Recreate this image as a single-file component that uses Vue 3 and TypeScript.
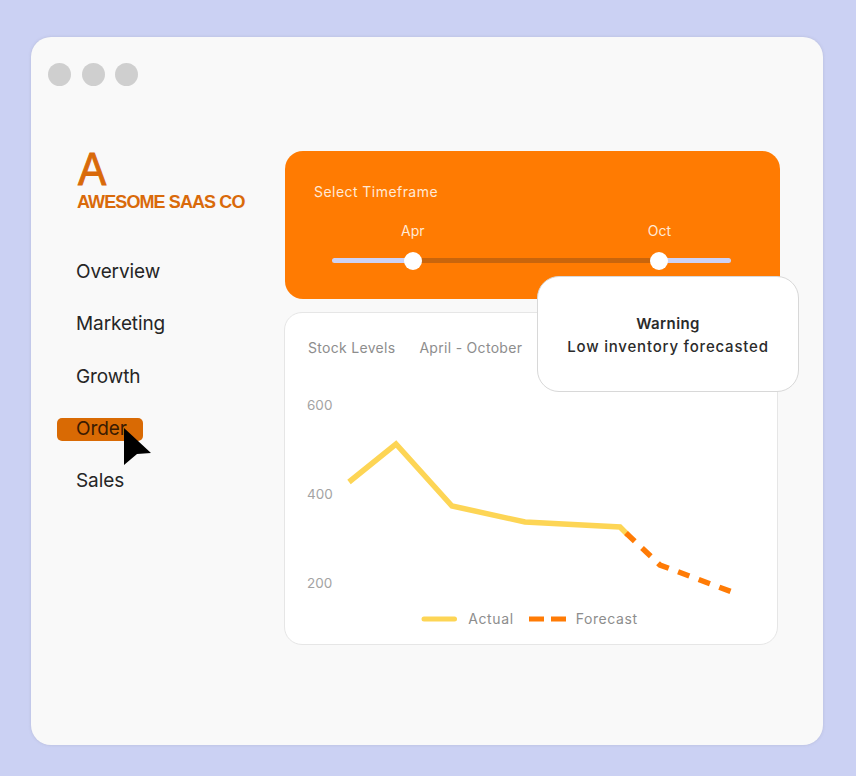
<script setup lang="ts">
const navItems = ["Overview", "Marketing", "Growth", "Order", "Sales"]
const ticks = ["600", "400", "200"]
</script>

<template>
  <div class="page">
    <div class="window">
      <div class="dots">
        <span class="dot"></span>
        <span class="dot"></span>
        <span class="dot"></span>
      </div>
      <div class="content">
        <aside class="sidebar">
          <div class="logo-mark">A</div>
          <div class="logo-name">AWESOME SAAS CO</div>
          <nav class="nav">
            <div v-for="item in navItems" :key="item" class="nav-item" :class="{ active: item === 'Order' }">
              <span>{{ item }}</span>
              <svg v-if="item === 'Order'" class="cursor" width="30" height="40" viewBox="0 0 30 40">
                <path d="M1 1 L28 26 L14 27 L1 38 Z" fill="#000" />
              </svg>
            </div>
          </nav>
        </aside>
        <main class="main">
          <section class="timeframe">
            <div class="timeframe-title">Select Timeframe</div>
            <div class="months">
              <span>Apr</span>
              <span>Oct</span>
            </div>
            <div class="slider">
              <div class="track-end"></div>
              <div class="track-mid"></div>
              <div class="track-end right"></div>
              <span class="handle left"></span>
              <span class="handle right"></span>
            </div>
          </section>
          <section class="chart-card">
            <div class="chart-head">
              <span>Stock Levels</span>
              <span>April - October</span>
            </div>
            <div class="chart-body">
              <div class="ticks">
                <span v-for="t in ticks" :key="t">{{ t }}</span>
              </div>
              <svg class="plot" width="440" height="220" viewBox="0 0 440 220">
                <polyline points="12,98 59,60 115,122 188,138 283,143 291,151" fill="none" stroke="#fdd555" stroke-width="5.5" />
                <polyline points="289,149 323,181 395,208" fill="none" stroke="#ff7b05" stroke-width="5.5" stroke-dasharray="12 10" />
              </svg>
            </div>
            <div class="legend">
              <svg width="37" height="6" viewBox="0 0 37 6">
                <line x1="4" y1="3" x2="34.5" y2="3" stroke="#fdd555" stroke-width="5" stroke-linecap="round" />
              </svg>
              <span class="legend-label">Actual</span>
              <svg class="legend-dash" width="37" height="6" viewBox="0 0 37 6">
                <line x1="0" y1="3" x2="37" y2="3" stroke="#ff7b05" stroke-width="5" stroke-dasharray="15 7" />
              </svg>
              <span class="legend-label forecast">Forecast</span>
            </div>
          </section>
          <div class="warning">
            <strong>Warning</strong>
            <span>Low inventory forecasted</span>
          </div>
        </main>
      </div>
    </div>
  </div>
</template>

<style>
html, body {
  margin: 0;
  background: #cbd1f3;
}
</style>

<style scoped>
.page {
  width: 856px;
  height: 776px;
  padding: 37px 33px 31px 31px;
  box-sizing: border-box;
  background: #cbd1f3;
  font-family: Inter, "Liberation Sans", sans-serif;
  overflow: hidden;
}

.window {
  height: 100%;
  background: #f9f9f9;
  border-radius: 20px;
  box-shadow: 0 0 3px rgba(120, 120, 140, 0.25);
  padding: 26px 0 0 17px;
  box-sizing: border-box;
}

.dots {
  display: flex;
  gap: 10.5px;
}

.dot {
  width: 23px;
  height: 23px;
  border-radius: 50%;
  background: #cfcfcf;
}

.content {
  display: flex;
  margin-top: 65px;
}

.sidebar {
  width: 237px;
  flex-shrink: 0;
  padding-left: 29px;
  box-sizing: border-box;
}

.logo-mark {
  font-family: "Liberation Sans", sans-serif;
  color: #d96a0a;
  font-size: 47px;
  line-height: 42px;
  margin: -3px 0 0 1px;
  -webkit-text-stroke: 1px #d96a0a;
  transform: scaleX(0.9);
  transform-origin: left center;
}

.logo-name {
  font-family: "Liberation Sans", sans-serif;
  font-weight: 700;
  color: #d96a0a;
  font-size: 18px;
  letter-spacing: -0.9px;
  line-height: 22px;
  margin-top: 1px;
  white-space: nowrap;
}

.nav {
  display: flex;
  flex-direction: column;
  gap: 28.25px;
  margin: 47px 0 0 -1px;
}

.nav-item {
  position: relative;
  width: fit-content;
  font-size: 19px;
  line-height: 24px;
  color: #262626;
  letter-spacing: -0.1px;
}

.nav-item span {
  position: relative;
}

.nav-item.active {
  color: #3a1b02;
}

.nav-item.active::before {
  content: "";
  position: absolute;
  left: -19px;
  top: 1px;
  width: 86px;
  height: 23px;
  background: #d96a04;
  border-radius: 5px;
}

.cursor {
  position: absolute;
  left: 47px;
  top: 10px;
}

.main {
  position: relative;
  width: 495px;
}

.timeframe {
  height: 148px;
  background: #ff7b02;
  border-radius: 18px;
  padding: 33px 47px 0 47px;
  box-sizing: border-box;
  color: #ffe9d6;
  font-size: 14px;
}

.timeframe-title {
  margin-left: -18px;
  line-height: 16px;
  letter-spacing: 0.45px;
}

.months {
  display: flex;
  justify-content: space-between;
  margin-top: 23px;
  line-height: 16px;
  padding: 0 62px 0 69px;
}

.slider {
  position: relative;
  display: flex;
  width: 399px;
  height: 5px;
  margin-top: 19px;
}

.track-end {
  width: 81px;
  background: #cdd2f5;
  border-radius: 3px 0 0 3px;
}

.track-end.right {
  width: 72px;
  border-radius: 0 3px 3px 0;
}

.track-mid {
  flex: 1;
  background: #c9650c;
}

.handle {
  position: absolute;
  top: -6.5px;
  width: 18px;
  height: 18px;
  border-radius: 50%;
  background: #fff;
}

.handle.left {
  left: 72px;
}

.handle.right {
  left: 318px;
}

.chart-card {
  width: 494px;
  height: 333px;
  margin-top: 13px;
  margin-left: -1px;
  background: #fff;
  border: 1px solid #e6e6e6;
  border-radius: 18px;
  box-sizing: border-box;
  padding: 27px 22px 0 23px;
  color: #8d8d8d;
}

.chart-head {
  display: flex;
  gap: 24px;
  font-size: 14px;
  line-height: 16px;
  letter-spacing: 0.3px;
}

.chart-body {
  display: flex;
  margin-top: 32px;
  height: 220px;
}

.ticks {
  display: flex;
  flex-direction: column;
  gap: 73px;
  width: 29px;
  padding-top: 9px;
  box-sizing: content-box;
  margin-left: -1px;
  margin-right: 1px;
  flex-shrink: 0;
  font-size: 13.5px;
  line-height: 16px;
  color: #a3a3a3;
}

.plot {
  flex-shrink: 0;
  margin-top: -4px;
  overflow: visible;
}

.legend {
  display: flex;
  align-items: center;
  justify-content: center;
  margin-top: 3px;
  padding-right: 5px;
  font-size: 14px;
  line-height: 16px;
  letter-spacing: 0.6px;
}

.legend-label {
  margin-left: 11px;
}

.legend-label.forecast {
  margin-left: 10px;
}

.legend-dash {
  margin-left: 15px;
}

.warning {
  position: absolute;
  left: 252px;
  top: 125px;
  width: 262px;
  height: 116px;
  padding-top: 2px;
  box-sizing: border-box;
  background: #fff;
  border: 1px solid #d8d8d8;
  border-radius: 22px;
  display: flex;
  flex-direction: column;
  align-items: center;
  justify-content: center;
  font-size: 15px;
  line-height: 23px;
  color: #2b2b2b;
  letter-spacing: 0.8px;
}

.warning strong {
  font-weight: 600;
  letter-spacing: 0.4px;
}

.warning span {
  font-weight: 500;
}
</style>
